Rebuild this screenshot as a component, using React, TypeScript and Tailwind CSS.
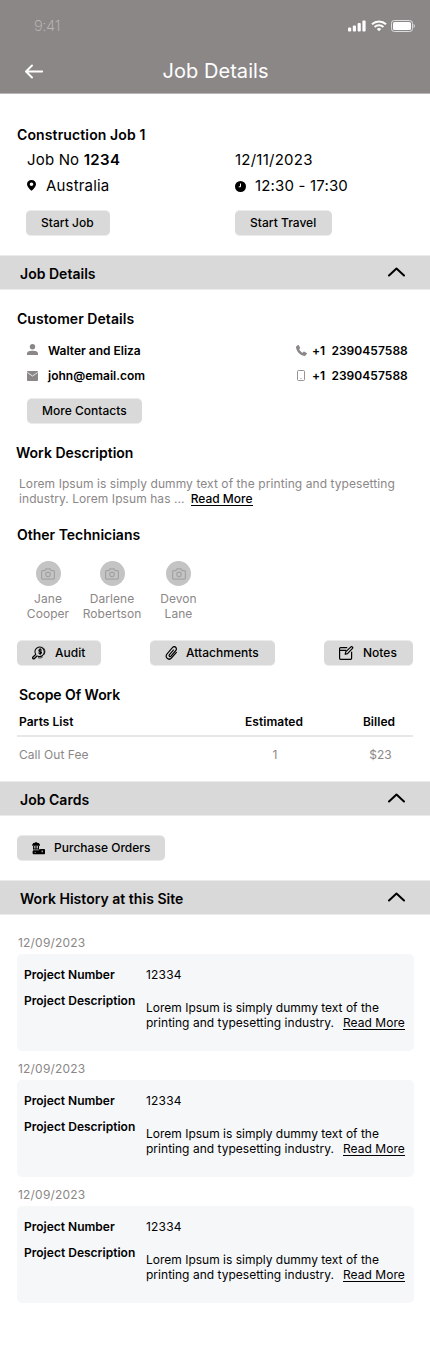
import type { ReactNode } from "react";

function Chevron() {
  return (
    <svg className="mb-px" width="18" height="10" viewBox="0 0 18 10" fill="none" stroke="#000" strokeWidth="2" strokeLinecap="round" strokeLinejoin="round">
      <path d="M2 8.500 9.500 1.500 17 8.500" />
    </svg>
  );
}

function SectionBar({ title }: { title: string }) {
  return (
    <div className="flex h-[35px] items-center justify-between border-y border-[#ebebeb] bg-[#d9d9d9] pr-[25px] pl-5">
      <h2 className="pt-px text-[14px] leading-[17px] font-semibold tracking-[0.02px]">{title}</h2>
      <Chevron />
    </div>
  );
}

function Button({ children, icon, className }: { children: ReactNode; icon?: ReactNode; className: string }) {
  return (
    <button className={"flex h-[26px] items-center rounded-[5px] border-y border-[#ebebeb] bg-[#d9d9d9] pl-[15px] text-[12px] font-medium tracking-[0.02px] whitespace-nowrap " + className}>
      {icon}
      {children}
    </button>
  );
}

function Technician({ first, last, className }: { first: string; last: string; className: string }) {
  return (
    <div className={"flex flex-col items-center text-center text-[12px] leading-[15px] tracking-[0.04px] text-[#8b8787] " + className}>
      <div className="mb-[5px] flex size-[25px] items-center justify-center rounded-full bg-[#c4c4c4]">
        <svg width="14" height="12" viewBox="0 0 14 12" fill="none" stroke="#a5a2a2" strokeWidth="1.200" strokeLinejoin="round">
          <path d="M1.600 2.600h2.200L5 .9h4l1.200 1.700h2.200c.6 0 1 .4 1 1v6.500c0 .6-.4 1-1 1H1.600c-.6 0-1-.4-1-1V3.600c0-.6.4-1 1-1Z" />
          <circle cx="7" cy="6.400" r="2.200" />
        </svg>
      </div>
      <span>{first}</span>
      <span>{last}</span>
    </div>
  );
}

function HistoryItem() {
  return (
    <article className="h-[126px]">
      <div className="flex h-[19px] items-start pl-[1px] text-[12px] leading-[15px] tracking-[0.2px] text-[#8b8787]">12/09/2023</div>
      <div className="flex h-[97px] rounded-[5px] bg-[#f6f7f9] pl-[7px] text-[12px] leading-[15px]">
        <div className="w-[122px] shrink-0 pt-[13px] font-semibold">
          <div>Project Number</div>
          <div className="mt-[11px] tracking-[0.02px]">Project Description</div>
        </div>
        <div className="pt-[13px] whitespace-nowrap">
          <div className="tracking-[0.2px]">12334</div>
          <div className="mt-[18px]">Lorem Ipsum is simply dummy text of the</div>
          <div className="flex gap-[9px]">
            <span className="tracking-[0.02px]">printing and typesetting industry.</span>
            <a className="h-[15px] border-b border-black tracking-[0.06px]">Read More</a>
          </div>
        </div>
      </div>
    </article>
  );
}

function AuditIcon() {
  return (
    <svg className="mr-[9px]" width="14" height="14" viewBox="0 0 14 14" fill="none" stroke="#000" strokeWidth="1.100" strokeLinecap="round">
      <path d="M3.700 8.400A4.700 4.700 0 1 1 6 10.200" />
      <path d="M3.500 8.600.8 11.300c-.8.8.6 2.100 1.400 1.400L5 10" strokeWidth="1.300" />
      <path d="M10.900 1.600c2.200 1.200 2.800 4.800.9 7.100M6.400 11.800c1.200.4 2.700.2 3.800-.5" strokeWidth=".8" />
      <path d="M9.400 4.100C9 3.200 6.800 3.200 6.800 4.500c0 1.400 2.700.8 2.700 2.100 0 1.400-2.400 1.300-2.800.3M8.100 2.600v6" />
    </svg>
  );
}

function PaperclipIcon() {
  return (
    <svg className="mr-[8px]" width="13" height="14" viewBox="0 0 24 24" preserveAspectRatio="none" fill="none" stroke="#000" strokeWidth="2.200" strokeLinecap="round" strokeLinejoin="round">
      <path d="M15.500 7 8.200 14.800c-1.800 2 .8 4.500 2.700 2.600l8.600-9.200c4-4.400-1.800-9.700-5.800-5.500L4.200 13c-5.500 6.200 2.300 13.200 8 7.200L21 11" />
    </svg>
  );
}

function NoteIcon() {
  return (
    <svg className="mr-[9px]" width="15" height="14" viewBox="0 0 15 14" fill="none" stroke="#000" strokeWidth="1.200" strokeLinejoin="round">
      <path d="M8.200 1.600H1.600a1 1 0 0 0-1 1v9.700a1 1 0 0 0 1 1h10a1 1 0 0 0 1-1V5.800M.6 4.400h6.600" />
      <path d="m6.200 8.300.5-2.400L11.900.9c.8-.8 2.400.6 1.600 1.500L8.500 7.600Z" />
    </svg>
  );
}

function OrdersIcon() {
  return (
    <svg className="mr-[9px]" width="13" height="13" viewBox="0 0 13 13" fill="#000">
      <path d="M2.400 1C2.800-.1 5.200-.1 5.600 1h1.200L8 2.800v1H.2v-1L1.300 1Z" />
      <path d="M1.100 3.800h1v3.400h-1zM2.800 3.800h.8v3.400h-.8zM4.400 3.800h.8v3.400h-.8zM6 3.800h1v3.400H6z" />
      <path d="M1 6.500h6v1.100H1zM1.400 8.300h5.600v4H1.400c-1.100 0-1.100-4 0-4Z" />
      <path d="M6.800 7.600 9 6.900h3c.7 0 1 .5 1 1.100v3.300c0 .7-.4 1-1 1H6.800Z" />
      <path d="M9.500 8.600H11v1.700H9.500zM2.700 10h1v1h-1z" fill="#999" />
    </svg>
  );
}

export default function App() {
  return (
    <main className="h-[1350px] w-[430px] overflow-hidden bg-white font-['Inter',sans-serif] text-black">
      <header className="h-[94px] border-b border-[#b9b6b6] bg-[#8b8787] text-white">
        <div className="flex h-[51px] items-center justify-between pr-[15px] pl-[34px]">
          <span className="pt-px text-[15px] font-extralight tracking-[-0.4px] text-[#c0bebe]">9:41</span>
          <div className="flex items-center gap-[4.500px]">
            <svg width="18" height="12" viewBox="0 0 18 12" fill="#fff">
              <rect x="0" y="7.400" width="3.200" height="4" rx="1" />
              <rect x="4.800" y="5.400" width="3.200" height="6" rx="1" />
              <rect x="9.600" y="3" width="3.200" height="8.400" rx="1" />
              <rect x="14.400" y=".4" width="3.200" height="11" rx="1" />
            </svg>
            <svg width="16" height="12" viewBox="0 0 16 12" fill="none" stroke="#fff" strokeWidth="2">
              <path d="M1 4.200a10.200 10.200 0 0 1 14 0M3.600 7a6.400 6.400 0 0 1 8.800 0" />
              <path d="M8 11.300 5.800 9.100a3.300 3.300 0 0 1 4.400 0Z" fill="#fff" stroke="none" />
            </svg>
            <svg width="24" height="12" viewBox="0 0 24 12">
              <rect x=".5" y=".5" width="21" height="11" rx="2.800" fill="none" stroke="#dedddd" />
              <rect x="2" y="2" width="18" height="8" rx="1.500" fill="#fff" />
              <path d="M22.600 4v4c1.600-.8 1.600-3.200 0-4Z" fill="#dedddd" />
            </svg>
          </div>
        </div>
        <div className="grid h-[41px] grid-cols-[60px_1fr_60px] items-center">
          <svg className="ml-[25px]" width="19" height="16" viewBox="0 0 19 16" fill="none" stroke="#fff" strokeWidth="1.900" strokeLinecap="round" strokeLinejoin="round">
            <path d="M17.200 7.500H1.200M7 1.500 1 7.500l6 6" />
          </svg>
          <h1 className="-mt-px pl-px text-center text-[20px] leading-6 tracking-[0.06px]">Job Details</h1>
        </div>
      </header>

      <section className="h-[161px] pt-8 pl-[17px]">
        <h2 className="text-[14px] leading-[17px] font-semibold tracking-[0.12px]">Construction Job 1</h2>
        <div className="grid grid-cols-[209px_1fr] pl-[9px] text-[15px] tracking-[0.17px]">
          <div className="h-[25px] pl-px leading-[33px]">
            Job No <b className="font-semibold tracking-[0.35px]">1234</b>
          </div>
          <div className="h-[25px] leading-[33px] tracking-[0.24px]">12/11/2023</div>
          <div className="flex h-[27px] items-center pt-[9px] pl-px">
            <svg className="mr-[10px] mb-[2px]" width="9" height="11" viewBox="0 0 9 11">
              <path fillRule="evenodd" d="M4.500 0C1.800 0 0 1.800 0 4.200 0 6.800 2.500 9 4.500 10.800 6.500 9 9 6.800 9 4.200 9 1.800 7.200 0 4.500 0Zm0 2.500a1.800 1.800 0 1 1 0 3.600 1.800 1.800 0 0 1 0-3.600Z" />
            </svg>
            Australia
          </div>
          <div className="flex h-[27px] items-center pt-[10px]">
            <svg className="mr-[9px]" width="11" height="11" viewBox="0 0 11 11">
              <circle cx="5.500" cy="5.500" r="5.500" />
              <path d="M5.500 2.500v3.300H3.800" fill="none" stroke="#fff" />
            </svg>
            12:30 - 17:30
          </div>
          <Button className="mt-[15px] w-[84px]">Start Job</Button>
          <Button className="mt-[15px] w-[97px]">Start Travel</Button>
        </div>
      </section>

      <SectionBar title="Job Details" />

      <section className="h-[491px] pt-5 pr-[17px] pl-[17px]">
        <h3 className="text-[14px] leading-[17px] font-semibold tracking-[0.05px]">Customer Details</h3>
        <div className="mt-[11px] grid grid-cols-[269px_1fr] pl-[10px] text-[12px] font-semibold whitespace-nowrap">
          <div className="flex h-[25px] items-center">
            <svg className="mr-[10px] mb-[2px]" width="11" height="11" viewBox="0 0 11 11" fill="#8b8787">
              <circle cx="5.500" cy="2.800" r="2.700" />
              <path d="M0 11V9.200C0 5.900 11 5.900 11 9.200V11Z" />
            </svg>
            Walter and Eliza
          </div>
          <div className="flex h-[25px] items-center">
            <svg className="mr-[5px]" width="11" height="11" viewBox="0 0 11 11" fill="#8b8787">
              <path d="M.2 1.500 2 .1c.3-.2.6-.1.8.2L4 2.600c.2.3.1.6-.1.8l-.8.8c.8 1.600 2 2.800 3.600 3.600l.9-1c.2-.2.5-.3.8-.1l2.300 1.200c.4.2.5.6.2.9L9.500 10.600c-.3.3-.7.4-1.200.3C4.200 10.200.4 6.400 0 2.200 0 1.900 0 1.700.2 1.500Z" />
            </svg>
            <span className="tracking-[0.05px] whitespace-pre">+1  2390457588</span>
          </div>
          <div className="flex h-[25px] items-center">
            <svg className="mr-[10px]" width="11" height="10" viewBox="0 0 11 10">
              <rect width="11" height="10" rx=".8" fill="#8b8787" />
              <path d="m.3 1.500 5.200 3.500 5.200-3.500" fill="none" stroke="#fff" strokeWidth=".8" />
            </svg>
            john@email.com
          </div>
          <div className="flex h-[25px] items-center">
            <svg className="mr-[7px] ml-px" width="8" height="11" viewBox="0 0 8 11" fill="none" stroke="#8b8787" strokeWidth=".9">
              <rect x=".5" y=".5" width="7" height="10" rx="1" />
              <path d="M3.500 8.500h1" />
            </svg>
            <span className="tracking-[0.05px] whitespace-pre">+1  2390457588</span>
          </div>
        </div>
        <Button className="mt-[10px] ml-[10px] w-[115px]">More Contacts</Button>

        <h3 className="mt-[20px] -ml-px text-[14px] leading-[17px] font-semibold">Work Description</h3>
        <div className="mt-[15px] pl-[2px] text-[12px] leading-[15px] tracking-[0.075px] whitespace-nowrap text-[#8b8787]">
          <div>Lorem Ipsum is simply dummy text of the printing and typesetting</div>
          <div className="flex gap-[6px]">
            <span>industry. Lorem Ipsum has ...</span>
            <a className="h-[15px] border-b border-black font-medium tracking-normal text-black">Read More</a>
          </div>
        </div>

        <h3 className="mt-[20px] text-[14px] leading-[17px] font-semibold">Other Technicians</h3>
        <div className="mt-[18px] flex">
          <Technician first="Jane" last="Cooper" className="w-[62px]" />
          <Technician first="Darlene" last="Robertson" className="w-[66px]" />
          <Technician first="Devon" last="Lane" className="w-[67px]" />
        </div>

        <div className="mt-[19px] flex justify-between">
          <Button icon={<AuditIcon />} className="w-[84px]">Audit</Button>
          <Button icon={<PaperclipIcon />} className="w-[125px]">Attachments</Button>
          <Button icon={<NoteIcon />} className="w-[89px]">Notes</Button>
        </div>

        <h3 className="mt-[20px] ml-[2px] text-[14px] leading-[17px] font-semibold tracking-[-0.05px]">Scope Of Work</h3>
        <div className="mt-[11px] grid grid-cols-[1fr_142px_68px] pl-[2px] text-[12px] leading-[15px] font-semibold tracking-[0.04px]">
          <span>Parts List</span>
          <span className="text-center">Estimated</span>
          <span className="text-center">Billed</span>
        </div>
        <div className="mt-[6px] h-[2px] bg-[#e8e8e8]" />
        <div className="mt-[10px] grid grid-cols-[1fr_142px_68px] pl-[2px] text-[12px] leading-[15px] tracking-[0.06px] text-[#8b8787]">
          <span>Call Out Fee</span>
          <span className="pl-[2px] text-center">1</span>
          <span className="pl-[3px] text-center">$23</span>
        </div>
      </section>

      <SectionBar title="Job Cards" />
      <section className="h-[64px] pt-[19px] pl-[17px]">
        <Button icon={<OrdersIcon />} className="w-[148px]">Purchase Orders</Button>
      </section>

      <SectionBar title="Work History at this Site" />
      <section className="pt-5 pr-4 pl-[17px]">
        <HistoryItem />
        <HistoryItem />
        <HistoryItem />
      </section>
    </main>
  );
}
